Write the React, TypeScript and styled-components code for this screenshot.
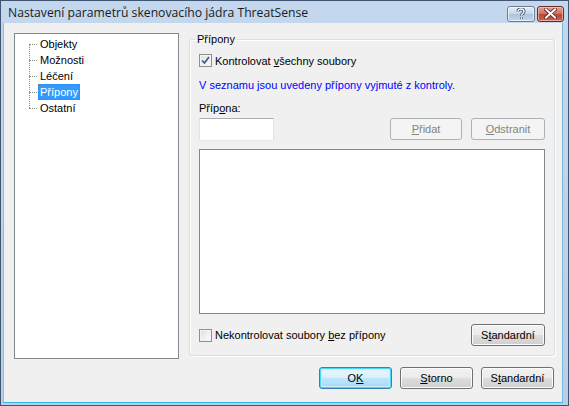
import React from "react";
import styled, { createGlobalStyle, css } from "styled-components";

const GlobalStyle = createGlobalStyle`
  html, body {
    margin: 0;
    padding: 0;
    background: #ffffff;
  }
  * {
    box-sizing: border-box;
  }
`;

const uiFont = `"Liberation Sans", Arial, sans-serif`;

const Window = styled.div`
  width: 569px;
  height: 406px;
  display: flex;
  flex-direction: column;
  background: linear-gradient(180deg, #c3d8ee 0%, #b7cfe8 100%);
  border: 1px solid #3f5570;
  padding: 0 5px 2px 2px;
  font-family: ${uiFont};
  font-size: 11px;
  color: #000;
`;

const TitleBar = styled.div`
  height: 22px;
  flex: none;
  display: flex;
  align-items: center;
  padding: 0 0 0 5px;
`;

const Title = styled.div`
  flex: 1;
  font-family: "Open Sans", "Liberation Sans", sans-serif;
  font-size: 12.2px;
  color: #1b1b1b;
  padding-top: 1px;
`;

const CaptionButtons = styled.div`
  display: flex;
  gap: 2px;
  margin-top: 3px;
  margin-right: -1px;
`;

const CaptionButton = styled.div<{ $close?: boolean }>`
  width: 28px;
  height: 16px;
  border-radius: 3px;
  display: flex;
  align-items: center;
  justify-content: center;
  border: 1px solid #6d7d91;
  background: linear-gradient(180deg, #e4edf7 0%, #c5d6e9 50%, #aec4dc 51%, #c3d6ea 100%);
  box-shadow: inset 0 0 0 1px rgba(255, 255, 255, 0.6);
  ${p =>
    p.$close &&
    css`
      width: 27px;
      border-color: #6b2b25;
      background: linear-gradient(180deg, #e0a197 0%, #cf6f60 50%, #b94734 51%, #c96450 100%);
      box-shadow: inset 0 0 0 1px rgba(255, 210, 200, 0.6);
    `}
`;

const Client = styled.div`
  flex: 1;
  display: flex;
  flex-direction: column;
  background: #f0f0f0;
  border-left: 1px solid #7fc4e6;
  border-bottom: 1px solid #31b6e6;
  border-right: 1px solid #7fb6d8;
  padding: 10px 6px 0 10px;
`;

const MainRow = styled.div`
  display: flex;
  gap: 10px;
  height: 326px;
`;

const TreeBox = styled.div`
  width: 165px;
  height: 326px;
  background: #fff;
  border: 1px solid #828790;
  padding: 2px 0 0 14px;
`;

const TreeList = styled.ul`
  list-style: none;
  margin: 0;
  padding: 0;
  position: relative;

  &::before {
    content: "";
    position: absolute;
    left: 0;
    top: 8px;
    height: 64px;
    border-left: 1px dotted #8c8c8c;
  }
`;

const TreeItem = styled.li<{ $selected?: boolean }>`
  height: 16px;
  display: flex;
  align-items: center;
  padding-left: 9px;
  position: relative;

  &::before {
    content: "";
    position: absolute;
    left: 0;
    top: 8px;
    width: 8px;
    border-top: 1px dotted #8c8c8c;
  }

  span {
    height: 16px;
    line-height: 16px;
    padding: 0 2px;
    ${p =>
      p.$selected &&
      css`
        background: #3399ff;
        color: #fff;
        outline: 1px dotted #c26a1c;
        outline-offset: -1px;
      `}
  }
`;

const Group = styled.fieldset`
  flex: 1;
  margin: 0;
  margin-right: 1px;
  height: 323px;
  border: 1px solid #d5dfe5;
  border-radius: 3px;
  box-shadow: 1px 1px 0 #fff, inset 1px 1px 0 #fff;
  padding: 8px 9px 0 9px;
  display: flex;
  flex-direction: column;
  min-width: 0;
`;

const Legend = styled.legend`
  padding: 0 2px;
  margin-left: -4px;
  line-height: 13px;
`;

const CheckRow = styled.label`
  display: flex;
  align-items: center;
  gap: 3px;
  height: 13px;
`;

const Box = styled.span`
  width: 13px;
  height: 13px;
  flex: none;
  border: 1px solid #8e8f8f;
  background: linear-gradient(135deg, #dcdcdc 0%, #f2f2f2 60%, #fbfbfb 100%);
  box-shadow: inset 0 0 0 1px #f4f4f4;
  display: flex;
  align-items: center;
  justify-content: center;
`;

const Note = styled.div`
  color: #0000ff;
  margin-top: 12px;
  line-height: 13px;
`;

const FieldLabel = styled.div`
  margin-top: 10px;
  line-height: 13px;
`;

const EditRow = styled.div`
  display: flex;
  align-items: flex-start;
  margin-top: 3px;
  height: 23px;
`;

const TextInput = styled.div`
  width: 75px;
  height: 23px;
  background: #fff;
  border: 1px solid #e2e3ea;
  border-top-color: #abadb3;
  border-bottom-color: #e3e9ef;
`;

const Spacer = styled.div`
  flex: 1;
`;

const Button = styled.div<{ $w?: number; $disabled?: boolean; $default?: boolean }>`
  width: ${p => p.$w ?? 73}px;
  height: 22px;
  border: 1px solid #707070;
  border-radius: 3px;
  background: linear-gradient(180deg, #f2f2f2 0%, #ebebeb 48%, #dddddd 52%, #cfcfcf 100%);
  box-shadow: inset 0 0 0 1px #fcfcfc;
  display: flex;
  align-items: center;
  justify-content: center;
  line-height: 13px;
  flex: none;

  ${p =>
    p.$disabled &&
    css`
      border-color: #adb2b5;
      background: #f4f4f4;
      box-shadow: none;
      color: #838383;
    `}
  ${p =>
    p.$default &&
    css`
      border-color: #3c7fb1;
      background: linear-gradient(180deg, #eaf6fd 0%, #d9f0fc 48%, #bee6fd 52%, #a7d9f5 100%);
      box-shadow: inset 0 0 0 1px #48d5f7, inset 0 0 0 2px #c9eefc;
    `}
`;

const ButtonPair = styled.div`
  display: flex;
  gap: 9px;
`;

const ListBox = styled.div`
  margin-top: 8px;
  height: 165px;
  background: #fff;
  border: 1px solid #828790;
`;

const BottomRow = styled.div`
  display: flex;
  align-items: center;
  margin-top: 10px;
`;

const Footer = styled.div`
  display: flex;
  justify-content: flex-end;
  gap: 8px;
  margin-top: 8px;
  padding-right: 2px;
`;

const U = styled.span`
  text-decoration: underline;
  text-underline-offset: 1px;
`;

const CheckMark = () => (
  <svg width="9" height="9" viewBox="0 0 9 9">
    <path d="M1 4.5 L3.5 7 L8 1" fill="none" stroke="#3c5a8c" strokeWidth="1.7" />
  </svg>
);

const Checkbox: React.FC<{ checked?: boolean; children: React.ReactNode }> = ({ checked, children }) => (
  <CheckRow>
    <Box>{checked && <CheckMark />}</Box>
    <span>{children}</span>
  </CheckRow>
);

const treeItems = ["Objekty", "Možnosti", "Léčení", "Přípony", "Ostatní"];

export default function App() {
  return (
    <>
      <GlobalStyle />
      <Window>
        <TitleBar>
          <Title>Nastavení parametrů skenovacího jádra ThreatSense</Title>
          <CaptionButtons>
            <CaptionButton>
              <svg width="10" height="12" viewBox="0 0 10 12">
                <path
                  d="M2 3.5 C2 1.5 3.5 1 5 1 C7 1 8 2 8 3.5 C8 5.5 5.5 5.5 5.5 7.5 M5.5 9.5 L5.5 11"
                  fill="none"
                  stroke="#3b4a5c"
                  strokeWidth="3"
                />
                <path
                  d="M2 3.5 C2 1.5 3.5 1 5 1 C7 1 8 2 8 3.5 C8 5.5 5.5 5.5 5.5 7.5 M5.5 9.5 L5.5 11"
                  fill="none"
                  stroke="#fff"
                  strokeWidth="1.4"
                />
              </svg>
            </CaptionButton>
            <CaptionButton $close>
              <svg width="13" height="11" viewBox="0 0 13 11">
                <path d="M2 1.5 L11 9.5 M11 1.5 L2 9.5" stroke="#5a2019" strokeWidth="3.6" strokeLinecap="square" />
                <path d="M2 1.5 L11 9.5 M11 1.5 L2 9.5" stroke="#fff" strokeWidth="2" strokeLinecap="square" />
              </svg>
            </CaptionButton>
          </CaptionButtons>
        </TitleBar>
        <Client>
          <MainRow>
            <TreeBox>
              <TreeList>
                {treeItems.map(item => (
                  <TreeItem key={item} $selected={item === "Přípony"}>
                    <span>{item}</span>
                  </TreeItem>
                ))}
              </TreeList>
            </TreeBox>
            <Group>
              <Legend>Přípony</Legend>
              <Checkbox checked>
                Kontrolovat <U>v</U>šechny soubory
              </Checkbox>
              <Note>V seznamu jsou uvedeny přípony vyjmuté z kontroly.</Note>
              <FieldLabel>
                Příp<U>o</U>na:
              </FieldLabel>
              <EditRow>
                <TextInput />
                <Spacer />
                <ButtonPair>
                  <Button $disabled $w={72}>
                    <span>
                      <U>P</U>řidat
                    </span>
                  </Button>
                  <Button $disabled $w={74}>
                    <span>
                      <U>O</U>dstranit
                    </span>
                  </Button>
                </ButtonPair>
              </EditRow>
              <ListBox />
              <BottomRow>
                <Checkbox>
                  Nekontrolovat soubory <U>b</U>ez přípony
                </Checkbox>
                <Spacer />
                <Button $w={74}>
                  <span>
                    S<U>t</U>andardní
                  </span>
                </Button>
              </BottomRow>
            </Group>
          </MainRow>
          <Footer>
            <Button $default>
              <span>
                O<U>K</U>
              </span>
            </Button>
            <Button>
              <span>
                <U>S</U>torno
              </span>
            </Button>
            <Button>
              <span>
                S<U>t</U>andardní
              </span>
            </Button>
          </Footer>
        </Client>
      </Window>
    </>
  );
}
